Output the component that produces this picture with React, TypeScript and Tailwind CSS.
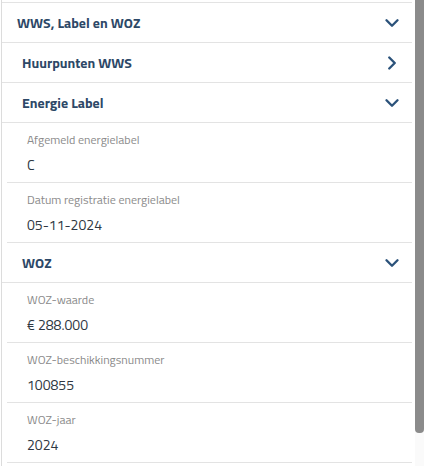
import { ChevronDown, ChevronRight } from 'lucide-react';

const font = { fontFamily: '"Titillium Web", Lato, "Noto Sans", sans-serif' };

type Field = { label: string; value: string };

const energie: Field[] = [
  { label: 'Afgemeld energielabel', value: 'C' },
  { label: 'Datum registratie energielabel', value: '05-11-2024' },
];

const woz: Field[] = [
  { label: 'WOZ-waarde', value: '€ 288.000' },
  { label: 'WOZ-beschikkingsnummer', value: '100855' },
  { label: 'WOZ-jaar', value: '2024' },
];

function Header({ title, open, sub }: { title: string; open: boolean; sub?: boolean }) {
  return (
    <div className="flex h-10 items-center justify-between border-b border-[#e3e3e3] pr-[9px]">
      <span className={`${sub ? 'pl-5' : 'pl-[15px]'} text-[14px] font-bold text-[#2d4867]`}>{title}</span>
      {open ? (
        <ChevronDown size={22} className="text-[#2b527a]" strokeWidth={2.6} />
      ) : (
        <ChevronRight size={22} className="text-[#2b527a]" strokeWidth={2.6} />
      )}
    </div>
  );
}

function Row({ label, value }: Field) {
  return (
    <div className="ml-[5px] flex h-[60px] flex-col border-b border-[#e3e3e3] pl-5 pt-[8px]">
      <span className="text-[12px] leading-[18px] text-[#8a8a8a]">{label}</span>
      <span className="mt-[7px] text-[14px] leading-[18px] text-[#2e3742]">{value}</span>
    </div>
  );
}

export default function App() {
  return (
    <div className="flex h-[466px] w-[424px] overflow-hidden bg-white" style={font}>
      <div className="ml-px w-[411px] border-l border-[#dcdcdc] pt-[2px]">
        <div className="border-t border-[#e3e3e3]">
          <Header title="WWS, Label en WOZ" open />
          <Header title="Huurpunten WWS" open={false} sub />
          <Header title="Energie Label" open sub />
          {energie.map((f) => (
            <Row key={f.label} {...f} />
          ))}
          <Header title="WOZ" open sub />
          {woz.map((f) => (
            <Row key={f.label} {...f} />
          ))}
        </div>
      </div>
      <div className="ml-[3px] w-[9px] bg-[#fafafa]">
        <div className="h-[433px] rounded-b-[4px] bg-[#8b8b8b]" />
      </div>
    </div>
  );
}
